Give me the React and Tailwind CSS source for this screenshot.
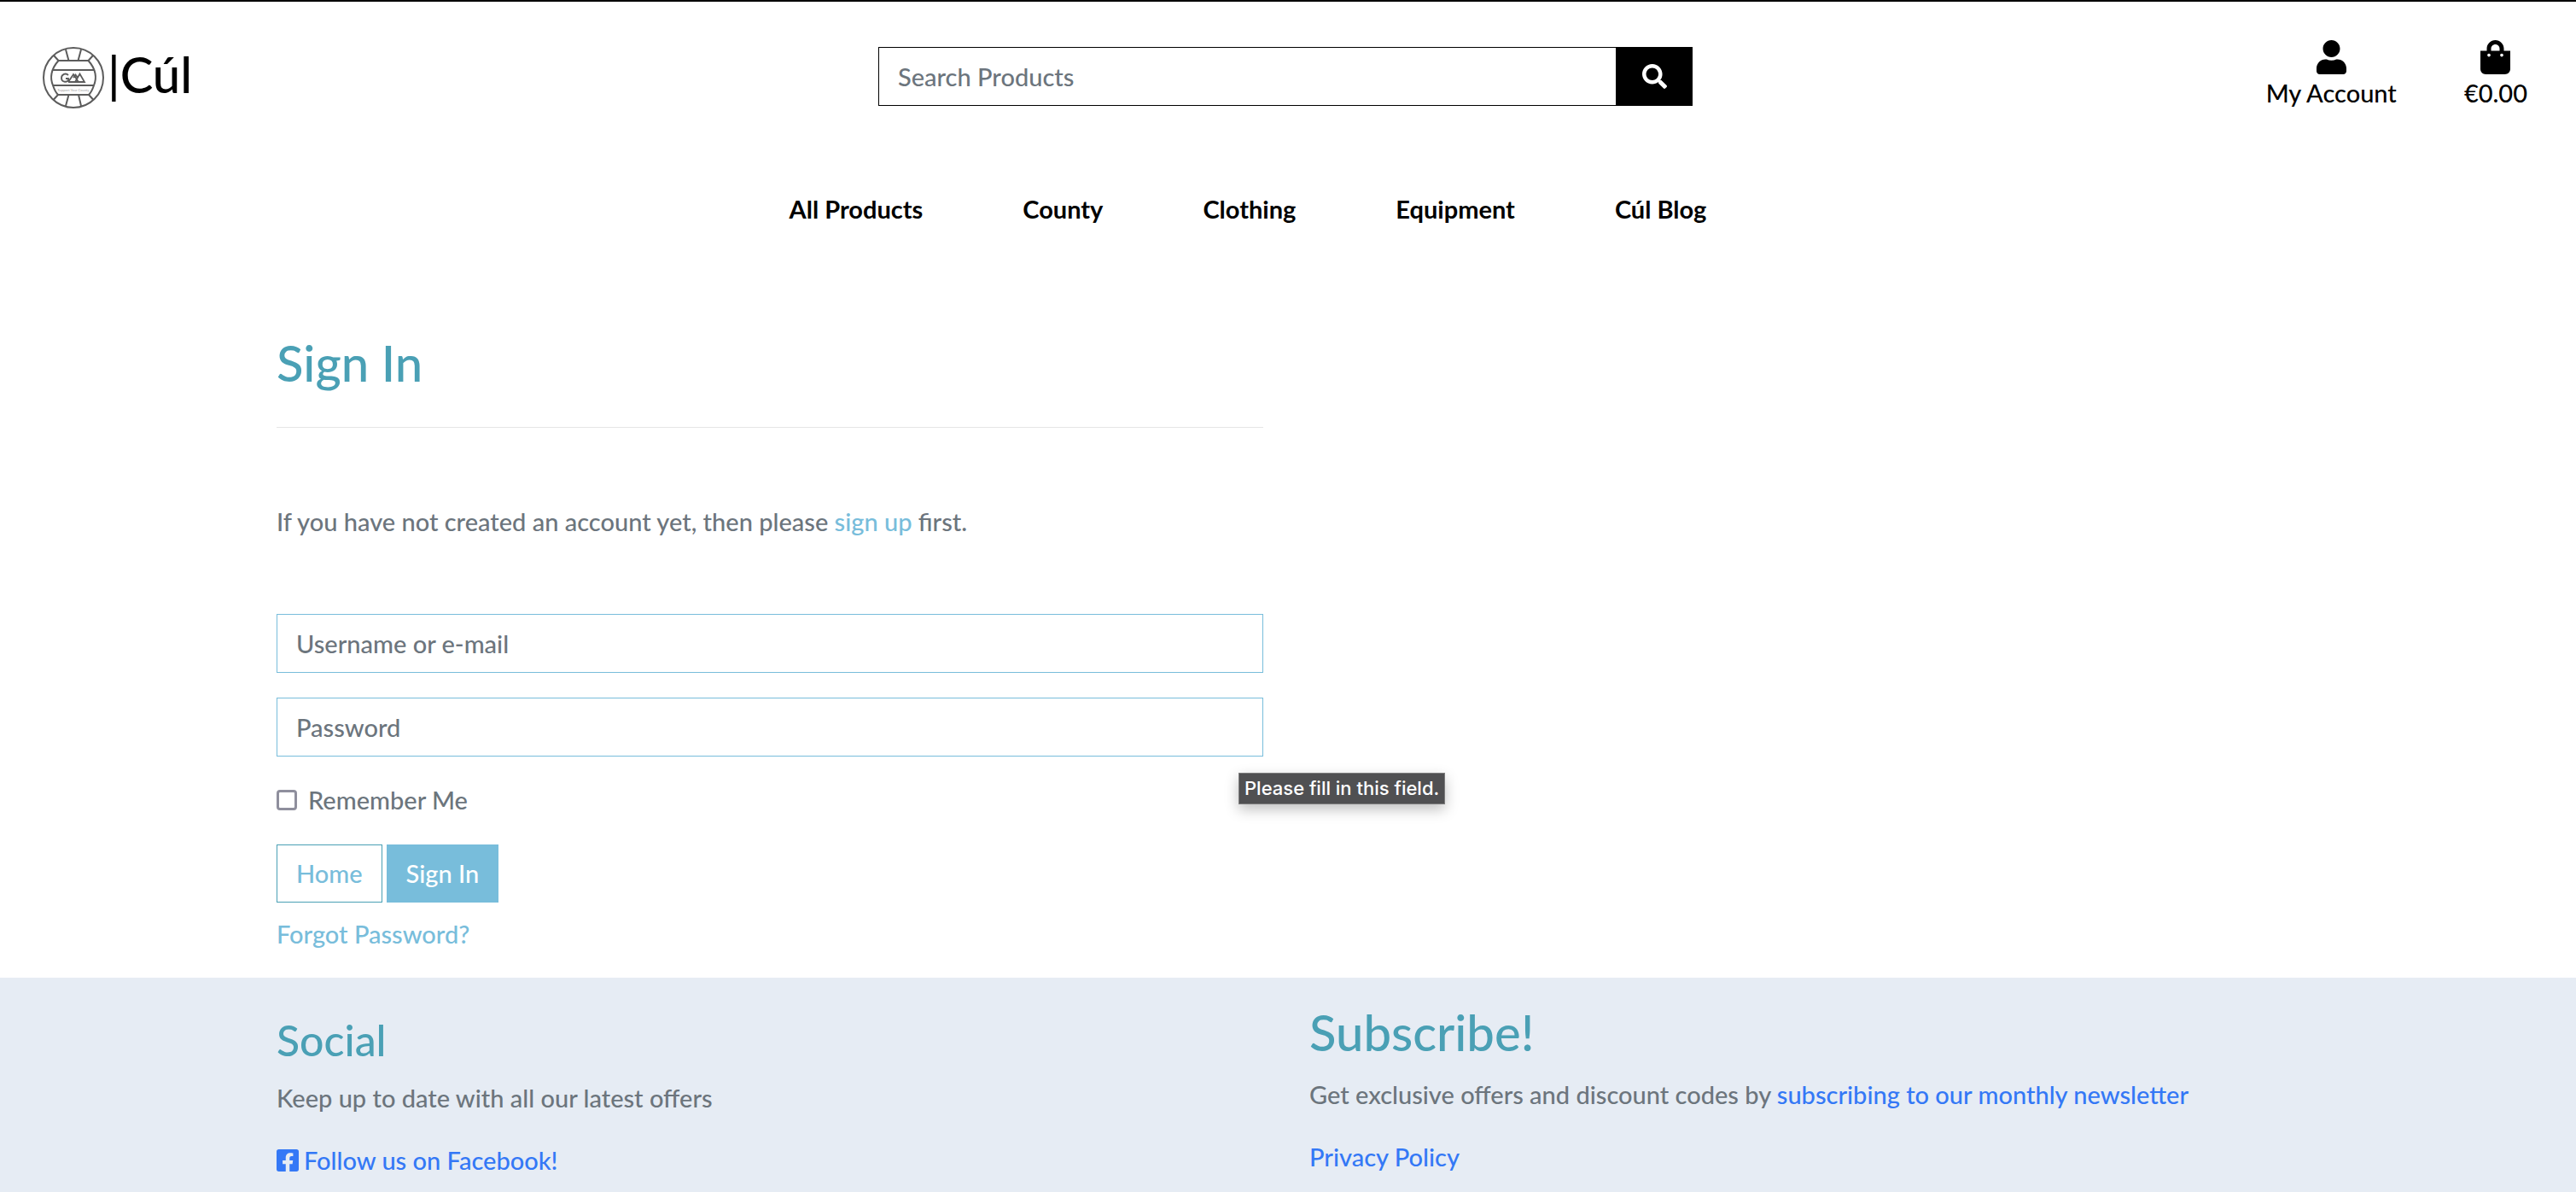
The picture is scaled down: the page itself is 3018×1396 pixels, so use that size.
import { FaUser, FaShoppingBag, FaSearch, FaFacebookSquare } from "react-icons/fa";

const navLinks = ["All Products", "County", "Clothing", "Equipment", "Cúl Blog"];

function BallLogo() {
  return (
    <svg viewBox="0 0 72 72" className="h-18 w-18 shrink-0" fill="none" stroke="#5c5c5c" strokeWidth="2" aria-hidden="true">
      <circle cx="36" cy="36" r="35" />
      <path d="M18.500 16H53.500C58 21 60.500 26 61.500 31C62.500 36 62 40 60 45C58.500 49.500 57 53 54 56H18C15 53 13.500 49.500 12 45C10 40 9.500 36 10.500 31C11.500 26 14 21 18.500 16Z" />
      <path d="M12 27H60M12 45H60M27 3L30.500 16M45 3L41.500 16M30.500 56L27 69M42 56L45 69M13 10L18.500 16M59 10L53.500 16M18 56L12.500 62M54 56L59.500 62" />
      <path d="M30 33C27 30 22 32 22 36.500C22 41 28 42 30 39V37H27M30 41L36 32L42 41H30M36 36L38.500 32.500L41 36M38 41L43.500 31.500L49 41H42" strokeWidth="1.800" />
      <text x="36" y="52" textAnchor="middle" fontSize="4" fontFamily="Lato, sans-serif" fill="#a8a8a8" stroke="none">Support Your County</text>
    </svg>
  );
}

function Header() {
  return (
    <header className="border-t-2 border-black text-black">
      <div className="grid grid-cols-3 items-start">
        <a href="#home" className="flex items-start gap-1 pt-[53px] pl-[50px]">
          <BallLogo />
          <span className="text-[58px] leading-[64px]">|Cúl</span>
        </a>
        <form className="mt-[53px] flex h-[69px] pr-[29px] pl-[23px]" role="search">
          <input
            type="text"
            aria-label="Search Products"
            placeholder="Search Products"
            className="min-w-0 flex-1 border border-r-0 border-black px-[22px] placeholder:text-[#6c757d]"
          />
          <button type="button" aria-label="Search" className="flex w-[90px] items-center justify-center bg-black text-white">
            <FaSearch />
          </button>
        </form>
        <div className="flex justify-end gap-[79px] pt-[45px] pr-[57px]">
          <a href="#account" className="flex flex-col items-center">
            <FaUser className="h-10 w-[35px]" />
            <span>My Account</span>
          </a>
          <a href="#bag" className="flex flex-col items-center">
            <FaShoppingBag className="h-10 w-[35px]" />
            <span>€0.00</span>
          </a>
        </div>
      </div>
      <nav className="mt-[92px] mr-[94px] flex justify-center gap-[117px] font-bold">
        {navLinks.map((label) => (
          <a key={label} href="#products">{label}</a>
        ))}
      </nav>
    </header>
  );
}

function SignIn() {
  return (
    <main className="mt-[123px] grid grid-cols-2 gap-x-[54px] pr-[328px] pl-[324px] text-[#6c757d]">
      <section>
        <h1 className="text-[58px] leading-[70px] text-[#4aa0b5]">Sign In</h1>
        <hr className="mt-10 border-[#e5e5e5]" />
        <p className="mt-[88px]">
          If you have not created an account yet, then please{" "}
          <a href="#signup" className="text-[#78bddb]">sign up</a> first.
        </p>
        <form className="mt-[86px]">
          <input
            type="text"
            aria-label="Username or e-mail"
            placeholder="Username or e-mail"
            className="block h-[69px] w-full border border-[#78bddb] px-[22px] placeholder:text-[#6c757d]"
          />
          <div className="relative mt-[29px]">
            <input
              type="password"
              aria-label="Password"
              placeholder="Password"
              className="block h-[69px] w-full border border-[#78bddb] px-[22px] placeholder:text-[#6c757d]"
            />
            <div role="tooltip" className="absolute top-[88px] left-[1127px] border border-[#7c7c7c] bg-[#505052] px-1.5 font-[Inter,sans-serif] text-[22px] leading-[35px] whitespace-nowrap text-white shadow-[0_6px_16px_rgba(0,0,0,0.25)]">
              Please fill in this field.
            </div>
          </div>
          <label className="mt-[29px] flex items-center gap-[13px]">
            <input type="checkbox" className="h-6 w-6 appearance-none rounded-[4px] border-3 border-[#8f8f9d] bg-white" />
            Remember Me
          </label>
          <div className="mt-[30px] flex gap-[5px]">
            <a href="#home" className="border border-[#4aa0b5] px-[22px] py-[11px] text-[#78bddb]">Home</a>
            <button type="button" className="border border-[#78bddb] bg-[#78bddb] px-[22px] py-[11px] text-white">Sign In</button>
          </div>
          <a href="#reset" className="mt-[15px] block text-[#78bddb]">Forgot Password?</a>
        </form>
      </section>
    </main>
  );
}

function Footer() {
  return (
    <footer className="mt-[29px] grid grid-cols-2 gap-x-[54px] bg-[#e6ecf4] pr-[328px] pb-9 pl-[324px] text-[#6c757d]">
      <section className="pt-[43px]">
        <h2 className="text-[50px] leading-[60px] text-[#4aa0b5]">Social</h2>
        <p className="mt-4">Keep up to date with all our latest offers</p>
        <a href="#facebook" className="mt-[29px] flex items-center gap-1.5 text-[#3478f6]">
          <FaFacebookSquare className="h-[30px] w-[26px]" />
          Follow us on Facebook!
        </a>
      </section>
      <section className="pt-[29px]">
        <h2 className="text-[58px] leading-[70px] text-[#4aa0b5]">Subscribe!</h2>
        <p className="mt-4">
          Get exclusive offers and discount codes by{" "}
          <a href="#newsletter" className="text-[#3478f6]">subscribing to our monthly newsletter</a>
        </p>
        <a href="#privacy" className="mt-[29px] block text-[#3478f6]">Privacy Policy</a>
      </section>
    </footer>
  );
}

export default function App() {
  return (
    <div className="bg-white font-[Lato,sans-serif] text-[29px] leading-[44px] font-medium">
      <Header />
      <SignIn />
      <Footer />
    </div>
  );
}
